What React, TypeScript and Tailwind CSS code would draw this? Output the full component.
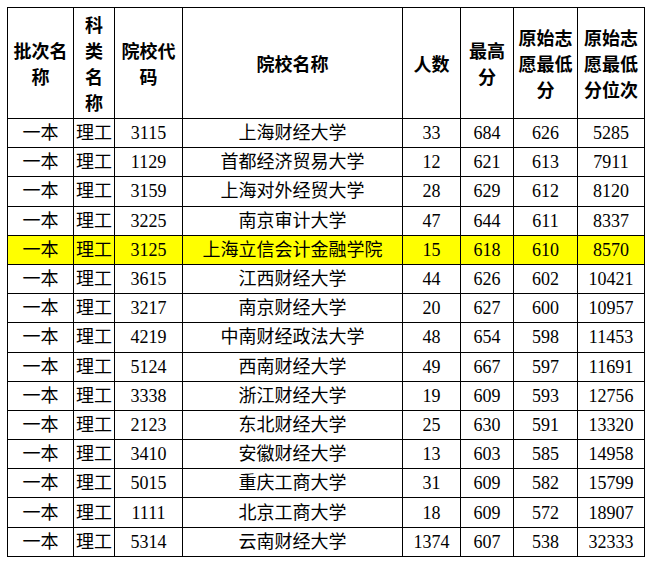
import React from "react";

const rows: string[][] = [
  ["3115", "上海财经大学", "33", "684", "626", "5285"],
  ["1129", "首都经济贸易大学", "12", "621", "613", "7911"],
  ["3159", "上海对外经贸大学", "28", "629", "612", "8120"],
  ["3225", "南京审计大学", "47", "644", "611", "8337"],
  ["3125", "上海立信会计金融学院", "15", "618", "610", "8570"],
  ["3615", "江西财经大学", "44", "626", "602", "10421"],
  ["3217", "南京财经大学", "20", "627", "600", "10957"],
  ["4219", "中南财经政法大学", "48", "654", "598", "11453"],
  ["5124", "西南财经大学", "49", "667", "597", "11691"],
  ["3338", "浙江财经大学", "19", "609", "593", "12756"],
  ["2123", "东北财经大学", "25", "630", "591", "13320"],
  ["3410", "安徽财经大学", "13", "603", "585", "14958"],
  ["5015", "重庆工商大学", "31", "609", "582", "15799"],
  ["1111", "北京工商大学", "18", "609", "572", "18907"],
  ["5314", "云南财经大学", "1374", "607", "538", "32333"],
];

const headers = ["批次名称", "科类名称", "院校代码", "院校名称", "人数", "最高分", "原始志愿最低分", "原始志愿最低分位次"];

export default function App() {
  return (
    <div className="w-[653px] h-[563px] bg-white pl-[7px] pt-[7px]">
      <table
        className="table-fixed border-collapse w-[637px] text-black text-[18px]"
        style={{ fontFamily: '"Liberation Serif", "Noto Sans CJK SC", serif' }}
      >
        <colgroup>
          <col className="w-[66px]" />
          <col className="w-[41px]" />
          <col className="w-[68px]" />
          <col className="w-[220px]" />
          <col className="w-[58px]" />
          <col className="w-[53px]" />
          <col className="w-[64px]" />
          <col className="w-[67px]" />
        </colgroup>
        <thead>
          <tr className="h-[111px]">
            {headers.map((h, i) => (
              <th
                key={i}
                className="border border-black px-[3px] py-0 align-middle text-center font-bold leading-[26px] break-all"
                style={{ fontFamily: '"Noto Sans CJK SC", sans-serif' }}
              >
                {h}
              </th>
            ))}
          </tr>
        </thead>
        <tbody>
          {rows.map((r, i) => (
            <tr key={i} className={i === 4 ? "h-[29.2px] bg-[#ffff00]" : "h-[29.2px]"}>
              <td className="border border-black p-0 text-center leading-none whitespace-nowrap">一本</td>
              <td className="border border-black p-0 text-center leading-none whitespace-nowrap">理工</td>
              {r.map((c, j) => (
                <td key={j} className="border border-black p-0 text-center leading-none whitespace-nowrap">
                  {c}
                </td>
              ))}
            </tr>
          ))}
        </tbody>
      </table>
    </div>
  );
}
